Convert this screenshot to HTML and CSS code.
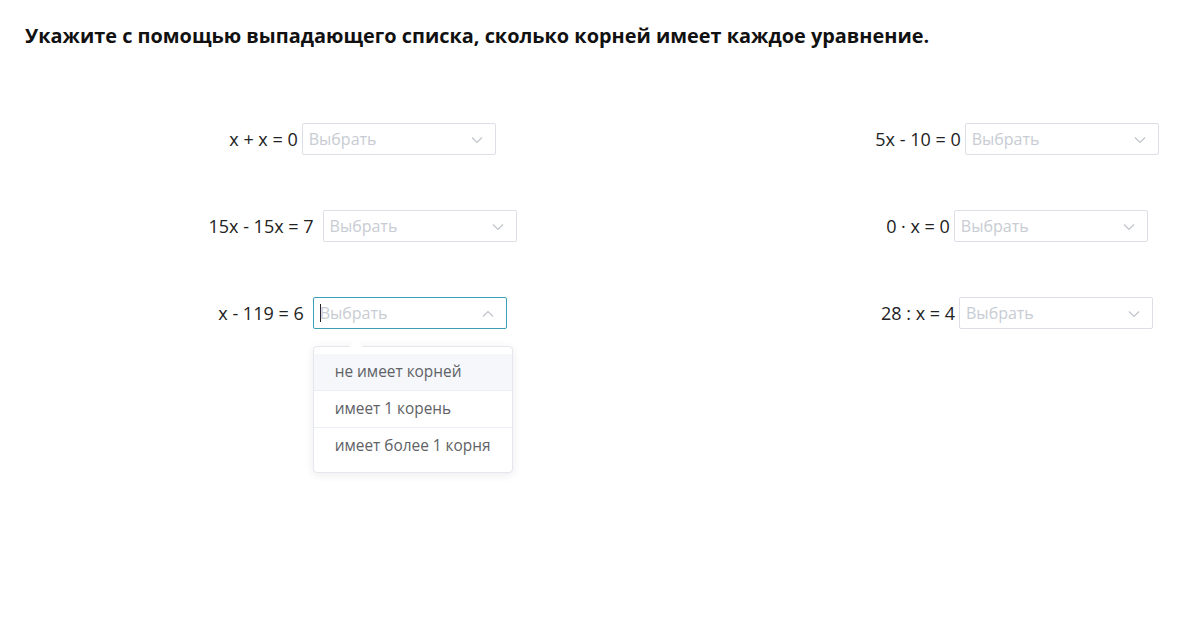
FILE: index.html
```html
<!DOCTYPE html>
<html lang="ru">
<head>
<meta charset="utf-8">
<link rel="stylesheet" href="styles.css">
</head>
<body>
<h1 class="title">Укажите с помощью выпадающего списка, сколько корней имеет каждое уравнение.</h1>
<div class="grid">
  <div class="col col-left">
    <div class="row"><span class="eq">x + x = 0</span><div class="select"><span class="ph">Выбрать</span><svg class="chev" viewBox="0 0 12 8"><path d="M1 1.5 L6 6.5 L11 1.5" /></svg></div></div>
    <div class="row"><span class="eq eq-wide">15x - 15x = 7</span><div class="select"><span class="ph">Выбрать</span><svg class="chev" viewBox="0 0 12 8"><path d="M1 1.5 L6 6.5 L11 1.5" /></svg></div></div>
    <div class="row row-open"><span class="eq eq-wide">x - 119 = 6</span><div class="select-wrap"><div class="select focused"><span class="caret"></span><span class="ph">Выбрать</span><svg class="chev" viewBox="0 0 12 8"><path d="M1 6.5 L6 1.5 L11 6.5" /></svg></div><div class="options"><span class="options-arrow"></span><div class="opt hover">не имеет корней</div><div class="opt sep">имеет 1 корень</div><div class="opt sep">имеет более 1 корня</div></div></div></div>
  </div>
  <div class="col col-right">
    <div class="row"><span class="eq">5x - 10 = 0</span><div class="select"><span class="ph">Выбрать</span><svg class="chev" viewBox="0 0 12 8"><path d="M1 1.5 L6 6.5 L11 1.5" /></svg></div></div>
    <div class="row"><span class="eq">0 · x = 0</span><div class="select"><span class="ph">Выбрать</span><svg class="chev" viewBox="0 0 12 8"><path d="M1 1.5 L6 6.5 L11 1.5" /></svg></div></div>
    <div class="row"><span class="eq">28 : x = 4</span><div class="select"><span class="ph">Выбрать</span><svg class="chev" viewBox="0 0 12 8"><path d="M1 1.5 L6 6.5 L11 1.5" /></svg></div></div>
  </div>
</div>
</body>
</html>
```
FILE: styles.css
```css
html, body {
  margin: 0;
  padding: 0;
  background: #fff;
}
body {
  font-family: "Open Sans", "Noto Sans", sans-serif;
  color: #1a1a1a;
  padding: 22px 25px 0 25px;
  min-height: 560px;
}
.title {
  margin: 0;
  font-size: 19.9px;
  font-weight: 700;
  line-height: 27px;
  color: #111;
}
.grid {
  display: grid;
  grid-template-columns: 675px 318px;
  column-gap: 158px;
  margin-top: 74px;
}
.col {
  display: flex;
  flex-direction: column;
  align-items: center;
  row-gap: 55px;
}
.row {
  display: flex;
  align-items: center;
  height: 32px;
}
.row-open {
  align-items: flex-start;
  height: auto;
}
.row-open .eq {
  line-height: 32px;
}
.eq {
  font-size: 18px;
  color: #222;
  margin-right: 4px;
  white-space: nowrap;
}
.eq-wide {
  margin-right: 9px;
}
.select-wrap {
  display: flex;
  flex-direction: column;
  width: 194px;
}
.select {
  position: relative;
  box-sizing: border-box;
  width: 194px;
  height: 32px;
  border: 1px solid #dcdfe6;
  border-radius: 2px;
  display: flex;
  align-items: center;
  padding-left: 6px;
  background: #fff;
}
.select.focused {
  border-color: #3d9fb4;
}
.ph {
  font-size: 16px;
  color: #c8ccd3;
}
.caret {
  display: inline-block;
  width: 1px;
  height: 18px;
  background: #222;
  margin-right: -1px;
}
.chev {
  position: absolute;
  right: 12px;
  top: 12px;
  width: 12px;
  height: 8px;
  fill: none;
  stroke: #c0c4cc;
  stroke-width: 1.2;
}
.options {
  position: relative;
  box-sizing: border-box;
  width: 200px;
  flex: none;
  margin-top: 17px;
  margin-left: 0;
  margin-right: -6px;
  padding: 7px 0 8px;
  background: #ffffff;
  border: 1px solid #e4e7ed;
  border-radius: 4px;
  box-shadow: 0 2px 10px rgba(0, 0, 0, 0.08);
}
.options-arrow {
  position: absolute;
  top: -7px;
  left: 35px;
  width: 0;
  height: 0;
  border-left: 7px solid transparent;
  border-right: 7px solid transparent;
  border-bottom: 7px solid #fff;
}
.opt {
  height: 36px;
  line-height: 36px;
  padding-left: 21px;
  font-size: 15.4px;
  color: #606266;
}
.opt.sep {
  border-top: 1px solid #ebeef5;
}
.opt.hover {
  background: #f5f7fa;
}
```
